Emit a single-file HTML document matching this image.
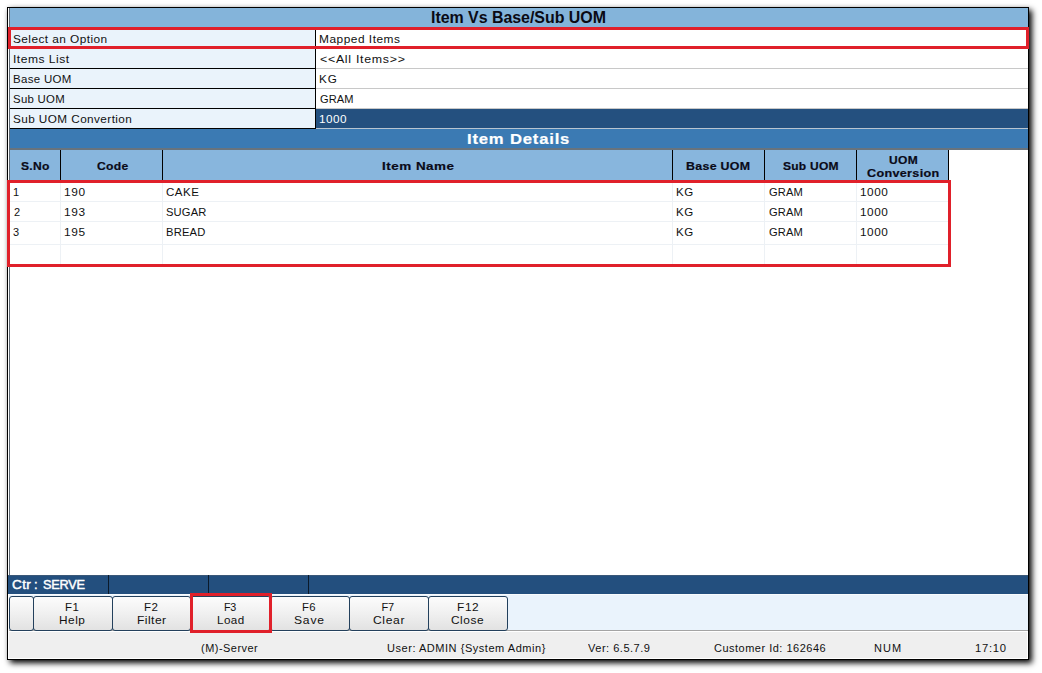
<!DOCTYPE html>
<html><head><meta charset="utf-8">
<style>
*{margin:0;padding:0;box-sizing:border-box}
html,body{width:1042px;height:673px;overflow:hidden;background:#fff;font-family:"Liberation Sans",sans-serif;color:#111}
.a{position:absolute}
.t{position:absolute;line-height:30px;white-space:nowrap;transform-origin:0 0}
#win{left:7px;top:7px;width:1022px;height:653px;border:1px solid #000;background:#fff;box-shadow:3px 3px 6px rgba(0,0,0,1),0 0 4px rgba(0,0,0,0.08)}
.btn{position:absolute;top:596px;height:35px;border:1px solid #23405c;border-radius:3px;background:linear-gradient(#fcfcfc,#f0f0f0 50%,#e2e2e2)}
</style></head><body>
<div id="win" class="a"></div>

<!-- title bar -->
<div class="a" style="left:9px;top:8px;width:1019px;height:19px;background:#84b4da"></div>

<!-- form rows -->
<div class="a" style="left:9px;top:27px;width:307px;height:102px;background:#eaf3fb"></div>
<div class="a" style="left:316px;top:27px;width:712px;height:82px;background:#fff"></div>
<div class="a" style="left:316px;top:109px;width:712px;height:19px;background:#24507f"></div>
<div class="a" style="left:315px;top:27px;width:1px;height:102px;background:#000"></div>
<div class="a" style="left:10px;top:68px;width:306px;height:1px;background:#000"></div>
<div class="a" style="left:10px;top:88px;width:306px;height:1px;background:#000"></div>
<div class="a" style="left:10px;top:108px;width:306px;height:1px;background:#000"></div>
<div class="a" style="left:10px;top:128px;width:306px;height:1px;background:#000"></div>
<div class="a" style="left:316px;top:68px;width:712px;height:1px;background:#c8c8c8"></div>
<div class="a" style="left:316px;top:88px;width:712px;height:1px;background:#c8c8c8"></div>
<div class="a" style="left:316px;top:108px;width:712px;height:1px;background:#c8c8c8"></div>
<div class="a" style="left:316px;top:128px;width:712px;height:1px;background:#b8c4d0"></div>

<!-- item details band -->
<div class="a" style="left:9px;top:129px;width:1019px;height:19px;background:#3b7ab3"></div>
<div class="a" style="left:9px;top:148px;width:1019px;height:2px;background:#68737d"></div>

<!-- table header -->
<div class="a" style="left:10px;top:150px;width:939px;height:30px;background:#88b6dd"></div>
<div class="a" style="left:60px;top:150px;width:1px;height:30px;background:#000"></div>
<div class="a" style="left:162px;top:150px;width:1px;height:30px;background:#000"></div>
<div class="a" style="left:672px;top:150px;width:1px;height:30px;background:#000"></div>
<div class="a" style="left:764px;top:150px;width:1px;height:30px;background:#000"></div>
<div class="a" style="left:856px;top:150px;width:1px;height:30px;background:#000"></div>
<div class="a" style="left:948px;top:150px;width:1px;height:30px;background:#000"></div>

<!-- table body grid -->
<div class="a" style="left:10px;top:201px;width:939px;height:1px;background:#edf1f5"></div>
<div class="a" style="left:10px;top:221px;width:939px;height:1px;background:#edf1f5"></div>
<div class="a" style="left:10px;top:244px;width:939px;height:1px;background:#edf1f5"></div>
<div class="a" style="left:60px;top:183px;width:1px;height:82px;background:#edf1f5"></div>
<div class="a" style="left:162px;top:183px;width:1px;height:82px;background:#edf1f5"></div>
<div class="a" style="left:672px;top:183px;width:1px;height:82px;background:#edf1f5"></div>
<div class="a" style="left:764px;top:183px;width:1px;height:82px;background:#edf1f5"></div>
<div class="a" style="left:856px;top:183px;width:1px;height:82px;background:#edf1f5"></div>

<!-- status bar -->



<!-- button strip -->
<div class="a" style="left:9px;top:594px;width:1019px;height:37px;background:#eaf3fc"></div>
<div class="a" style="left:9px;top:594px;width:1019px;height:1px;background:#f8fbfd"></div>
<div class="a" style="left:9px;top:630px;width:1019px;height:1px;background:#a4a4a4"></div>
<div class="btn" style="left:9px;width:25px"></div>
<div class="btn" style="left:33px;width:80px"></div>
<div class="btn" style="left:112px;width:79px"></div>
<div class="btn" style="left:190px;width:81px"></div>
<div class="btn" style="left:270px;width:80px"></div>
<div class="btn" style="left:349px;width:80px"></div>
<div class="btn" style="left:428px;width:80px"></div>

<!-- bottom bar -->
<div class="a" style="left:8px;top:631px;width:1020px;height:28px;background:#efefef"></div>
<div class="a" style="left:8px;top:631px;width:1020px;height:1px;background:#fff"></div>

<!-- frame inner lines -->
<div class="a" style="left:8px;top:8px;width:1px;height:651px;background:#fff"></div>
<div class="a" style="left:9px;top:8px;width:1px;height:586px;background:#5f6a74"></div>
<div class="a" style="left:8px;top:658px;width:1020px;height:1px;background:#fff"></div>
<div class="a" style="left:8px;top:575px;width:1020px;height:19px;background:#234f7e"></div>
<div class="a" style="left:8px;top:575px;width:1020px;height:1px;background:#3a5878"></div>
<div class="a" style="left:108px;top:575px;width:1px;height:19px;background:#0b1a2a"></div>
<div class="a" style="left:208px;top:575px;width:1px;height:19px;background:#0b1a2a"></div>
<div class="a" style="left:308px;top:575px;width:1px;height:19px;background:#0b1a2a"></div>
<div class="a" style="left:1027px;top:631px;width:1px;height:28px;background:#fff"></div>

<div class="t" style="left:12.72px;top:24px;font-size:11px;font-weight:normal;color:#111;transform:scaleX(1.079);letter-spacing:0.39px;">Select an Option</div>
<div class="t" style="left:12.70px;top:44px;font-size:11px;font-weight:normal;color:#111;transform:scaleX(1.096);letter-spacing:0.45px;">Items List</div>
<div class="t" style="left:12.56px;top:64px;font-size:11px;font-weight:normal;color:#111;transform:scaleX(1.043);letter-spacing:0.31px;">Base UOM</div>
<div class="t" style="left:13.06px;top:84px;font-size:11px;font-weight:normal;color:#111;transform:scaleX(1.036);letter-spacing:0.27px;">Sub UOM</div>
<div class="t" style="left:12.93px;top:104px;font-size:11px;font-weight:normal;color:#111;transform:scaleX(1.069);letter-spacing:0.39px;">Sub UOM Convertion</div>
<div class="t" style="left:318.72px;top:24px;font-size:11px;font-weight:normal;color:#111;transform:scaleX(1.081);letter-spacing:0.47px;">Mapped Items</div>
<div class="t" style="left:319.80px;top:44px;font-size:11px;font-weight:normal;color:#111;transform:scaleX(1.126);letter-spacing:0.63px;">&lt;&lt;All Items&gt;&gt;</div>
<div class="t" style="left:318.74px;top:64px;font-size:11px;font-weight:normal;color:#111;transform:scaleX(1.061);letter-spacing:0.80px;">KG</div>
<div class="t" style="left:320.00px;top:84px;font-size:11px;font-weight:normal;color:#111;transform:scaleX(1.006);letter-spacing:0.07px;">GRAM</div>
<div class="t" style="left:319.43px;top:104px;font-size:11px;font-weight:normal;color:#fff;transform:scaleX(1.065);letter-spacing:0.47px;">1000</div>
<div class="t" style="left:21.00px;top:151px;font-size:11px;font-weight:bold;color:#0a0a18;transform:scaleX(1.096);letter-spacing:0.24px;-webkit-text-stroke:0.2px #0a0a18;">S.No</div>
<div class="t" style="left:96.80px;top:151px;font-size:11px;font-weight:bold;color:#0a0a18;transform:scaleX(1.103);letter-spacing:0.28px;-webkit-text-stroke:0.2px #0a0a18;">Code</div>
<div class="t" style="left:382.38px;top:151px;font-size:11px;font-weight:bold;color:#0a0a18;transform:scaleX(1.222);letter-spacing:0.41px;-webkit-text-stroke:0.2px #0a0a18;">Item Name</div>
<div class="t" style="left:686.38px;top:151px;font-size:11px;font-weight:bold;color:#0a0a18;transform:scaleX(1.125);letter-spacing:0.28px;-webkit-text-stroke:0.2px #0a0a18;">Base UOM</div>
<div class="t" style="left:783.40px;top:151px;font-size:11px;font-weight:bold;color:#0a0a18;transform:scaleX(1.093);letter-spacing:0.23px;-webkit-text-stroke:0.2px #0a0a18;">Sub UOM</div>
<div class="t" style="left:888.51px;top:145px;font-size:11px;font-weight:bold;color:#0a0a18;transform:scaleX(1.091);letter-spacing:0.33px;-webkit-text-stroke:0.2px #0a0a18;">UOM</div>
<div class="t" style="left:866.90px;top:158px;font-size:11px;font-weight:bold;color:#0a0a18;transform:scaleX(1.145);letter-spacing:0.28px;-webkit-text-stroke:0.2px #0a0a18;">Conversion</div>
<div class="t" style="left:431.00px;top:3px;font-size:16px;font-weight:bold;color:#0a0a14;transform:scaleX(0.997);letter-spacing:-0.03px;">Item Vs Base/Sub UOM</div>
<div class="t" style="left:466.89px;top:124px;font-size:15px;font-weight:bold;color:#fff;transform:scaleX(1.108);letter-spacing:0.74px;-webkit-text-stroke:0.2px #fff;">Item Details</div>
<div class="t" style="left:201.31px;top:634px;font-size:10px;font-weight:normal;color:#111;transform:scaleX(1.094);letter-spacing:0.45px;">(M)-Server</div>
<div class="t" style="left:386.90px;top:634px;font-size:10px;font-weight:normal;color:#111;transform:scaleX(1.102);letter-spacing:0.48px;">User: ADMIN {System Admin}</div>
<div class="t" style="left:587.70px;top:634px;font-size:10px;font-weight:normal;color:#111;transform:scaleX(1.106);letter-spacing:0.44px;">Ver: 6.5.7.9</div>
<div class="t" style="left:713.50px;top:634px;font-size:10px;font-weight:normal;color:#111;transform:scaleX(1.098);letter-spacing:0.46px;">Customer Id: 162646</div>
<div class="t" style="left:873.50px;top:634px;font-size:10px;font-weight:normal;color:#111;transform:scaleX(1.100);letter-spacing:0.95px;">NUM</div>
<div class="t" style="left:975.28px;top:634px;font-size:10px;font-weight:normal;color:#111;transform:scaleX(1.123);letter-spacing:0.66px;">17:10</div>
<div class="t" style="left:11.56px;top:570px;font-size:13px;font-weight:normal;color:#fff;transform:scaleX(1.044);letter-spacing:0.34px;-webkit-text-stroke:0.45px #fff;">Ctr</div>
<div class="t" style="left:42.82px;top:570px;font-size:13px;font-weight:normal;color:#fff;transform:scaleX(0.978);letter-spacing:-0.24px;-webkit-text-stroke:0.45px #fff;">SERVE</div>
<div class="t" style="left:34.00px;top:570px;font-size:13px;font-weight:normal;color:#fff;transform:scaleX(1.000);letter-spacing:0.00px;-webkit-text-stroke:0.45px #fff;">:</div>
<div class="t" style="left:65.16px;top:592px;font-size:11px;font-weight:normal;color:#111;transform:scaleX(1.041);letter-spacing:0.43px;">F1</div>
<div class="t" style="left:59.43px;top:605px;font-size:11px;font-weight:normal;color:#111;transform:scaleX(1.074);letter-spacing:0.48px;">Help</div>
<div class="t" style="left:144.45px;top:592px;font-size:11px;font-weight:normal;color:#111;transform:scaleX(1.050);letter-spacing:0.52px;">F2</div>
<div class="t" style="left:137.10px;top:605px;font-size:11px;font-weight:normal;color:#111;transform:scaleX(1.098);letter-spacing:0.41px;">Filter</div>
<div class="t" style="left:223.62px;top:592px;font-size:11px;font-weight:normal;color:#111;transform:scaleX(0.975);letter-spacing:-0.31px;">F3</div>
<div class="t" style="left:216.54px;top:605px;font-size:11px;font-weight:normal;color:#111;transform:scaleX(1.059);letter-spacing:0.43px;">Load</div>
<div class="t" style="left:302.38px;top:592px;font-size:11px;font-weight:normal;color:#111;transform:scaleX(1.025);letter-spacing:0.29px;">F6</div>
<div class="t" style="left:294.20px;top:605px;font-size:11px;font-weight:normal;color:#111;transform:scaleX(1.100);letter-spacing:0.73px;">Save</div>
<div class="t" style="left:381.40px;top:592px;font-size:11px;font-weight:normal;color:#111;transform:scaleX(1.000);letter-spacing:0.00px;">F7</div>
<div class="t" style="left:372.50px;top:605px;font-size:11px;font-weight:normal;color:#111;transform:scaleX(1.100);letter-spacing:0.57px;">Clear</div>
<div class="t" style="left:457.32px;top:592px;font-size:11px;font-weight:normal;color:#111;transform:scaleX(1.076);letter-spacing:0.60px;">F12</div>
<div class="t" style="left:451.32px;top:605px;font-size:11px;font-weight:normal;color:#111;transform:scaleX(1.080);letter-spacing:0.50px;">Close</div>
<div class="t" style="left:13.00px;top:177px;font-size:11px;font-weight:normal;color:#111;transform:scaleX(1.000);letter-spacing:0.00px;">1</div>
<div class="t" style="left:63.52px;top:177px;font-size:11px;font-weight:normal;color:#111;transform:scaleX(1.079);letter-spacing:0.63px;">190</div>
<div class="t" style="left:166.15px;top:177px;font-size:11px;font-weight:normal;color:#111;transform:scaleX(1.050);letter-spacing:0.44px;">CAKE</div>
<div class="t" style="left:675.65px;top:177px;font-size:11px;font-weight:normal;color:#111;transform:scaleX(1.046);letter-spacing:0.62px;">KG</div>
<div class="t" style="left:768.50px;top:177px;font-size:11px;font-weight:normal;color:#111;transform:scaleX(1.012);letter-spacing:0.13px;">GRAM</div>
<div class="t" style="left:859.63px;top:177px;font-size:11px;font-weight:normal;color:#111;transform:scaleX(1.070);letter-spacing:0.50px;">1000</div>
<div class="t" style="left:14.00px;top:197px;font-size:11px;font-weight:normal;color:#111;transform:scaleX(1.000);letter-spacing:0.00px;">2</div>
<div class="t" style="left:63.52px;top:197px;font-size:11px;font-weight:normal;color:#111;transform:scaleX(1.079);letter-spacing:0.63px;">193</div>
<div class="t" style="left:166.18px;top:197px;font-size:11px;font-weight:normal;color:#111;transform:scaleX(1.017);letter-spacing:0.16px;">SUGAR</div>
<div class="t" style="left:675.65px;top:197px;font-size:11px;font-weight:normal;color:#111;transform:scaleX(1.046);letter-spacing:0.62px;">KG</div>
<div class="t" style="left:768.50px;top:197px;font-size:11px;font-weight:normal;color:#111;transform:scaleX(1.012);letter-spacing:0.13px;">GRAM</div>
<div class="t" style="left:859.63px;top:197px;font-size:11px;font-weight:normal;color:#111;transform:scaleX(1.070);letter-spacing:0.50px;">1000</div>
<div class="t" style="left:13.00px;top:217px;font-size:11px;font-weight:normal;color:#111;transform:scaleX(1.000);letter-spacing:0.00px;">3</div>
<div class="t" style="left:63.52px;top:217px;font-size:11px;font-weight:normal;color:#111;transform:scaleX(1.079);letter-spacing:0.63px;">195</div>
<div class="t" style="left:166.18px;top:217px;font-size:11px;font-weight:normal;color:#111;transform:scaleX(1.018);letter-spacing:0.16px;">BREAD</div>
<div class="t" style="left:675.65px;top:217px;font-size:11px;font-weight:normal;color:#111;transform:scaleX(1.046);letter-spacing:0.62px;">KG</div>
<div class="t" style="left:768.50px;top:217px;font-size:11px;font-weight:normal;color:#111;transform:scaleX(1.012);letter-spacing:0.13px;">GRAM</div>
<div class="t" style="left:859.63px;top:217px;font-size:11px;font-weight:normal;color:#111;transform:scaleX(1.070);letter-spacing:0.50px;">1000</div>

<!-- red annotation boxes -->
<div class="a" style="left:8px;top:27px;width:1021px;height:22px;border:3px solid #e0202a"></div>
<div class="a" style="left:7px;top:180px;width:944px;height:87px;border:3px solid #e0202a"></div>
<div class="a" style="left:190px;top:593px;width:82px;height:40px;border:3px solid #e0202a"></div>
</body></html>
